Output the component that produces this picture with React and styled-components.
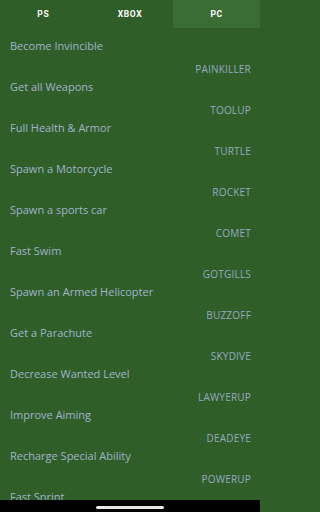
import React, { useState } from 'react';
import styled, { createGlobalStyle } from 'styled-components';

const GlobalStyle = createGlobalStyle`
  html, body {
    margin: 0;
    padding: 0;
    background: #2f5e29;
  }
  * {
    box-sizing: border-box;
  }
`;

const Screen = styled.div`
  width: 260px;
  height: 512px;
  display: flex;
  flex-direction: column;
  background: #2f5e29;
  overflow: hidden;
  font-family: 'Open Sans', 'Noto Sans', Arial, sans-serif;
`;

const Tabs = styled.div`
  display: grid;
  grid-template-columns: repeat(3, 1fr);
  height: 28px;
  flex-shrink: 0;
`;

const Tab = styled.button`
  border: none;
  margin: 0;
  padding: 0;
  background: ${p => (p.$active ? '#3a6d33' : 'transparent')};
  color: #ffffff;
  font-family: Roboto, 'Noto Sans', Arial, sans-serif;
  font-size: 8.5px;
  font-weight: 700;
  letter-spacing: 0.6px;
  cursor: pointer;
`;

const List = styled.div`
  flex: 1;
  overflow: hidden;
  padding: 9px 9px 0 10px;
`;

const Item = styled.div`
  display: flex;
  flex-direction: column;
  gap: 5px;
`;

const Title = styled.div`
  color: #a1b4c9;
  font-size: 11px;
  line-height: 18px;
  white-space: nowrap;
`;

const Code = styled.div`
  color: #97aabf;
  font-size: 10px;
  line-height: 18px;
  text-align: right;
  letter-spacing: 0.2px;
`;

const NavBar = styled.div`
  height: 12px;
  flex-shrink: 0;
  background: #000;
  display: flex;
  justify-content: center;
  padding-top: 6px;
`;

const HomeIndicator = styled.div`
  width: 68px;
  height: 3px;
  border-radius: 2px;
  background: #e6e6e6;
`;

const cheats = [
  ['Become Invincible', 'PAINKILLER'],
  ['Get all Weapons', 'TOOLUP'],
  ['Full Health & Armor', 'TURTLE'],
  ['Spawn a Motorcycle', 'ROCKET'],
  ['Spawn a sports car', 'COMET'],
  ['Fast Swim', 'GOTGILLS'],
  ['Spawn an Armed Helicopter', 'BUZZOFF'],
  ['Get a Parachute', 'SKYDIVE'],
  ['Decrease Wanted Level', 'LAWYERUP'],
  ['Improve Aiming', 'DEADEYE'],
  ['Recharge Special Ability', 'POWERUP'],
  ['Fast Sprint', 'CATCHME'],
];

const App = () => {
  const [tab, setTab] = useState('PC');

  return (
    <Screen>
      <GlobalStyle />
      <Tabs>
        {['PS', 'XBOX', 'PC'].map(t => (
          <Tab key={t} $active={tab === t} onClick={() => setTab(t)}>
            {t}
          </Tab>
        ))}
      </Tabs>
      <List>
        {cheats.map(([title, code]) => (
          <Item key={code}>
            <Title>{title}</Title>
            <Code>{code}</Code>
          </Item>
        ))}
      </List>
      <NavBar>
        <HomeIndicator />
      </NavBar>
    </Screen>
  );
};

export default App;
